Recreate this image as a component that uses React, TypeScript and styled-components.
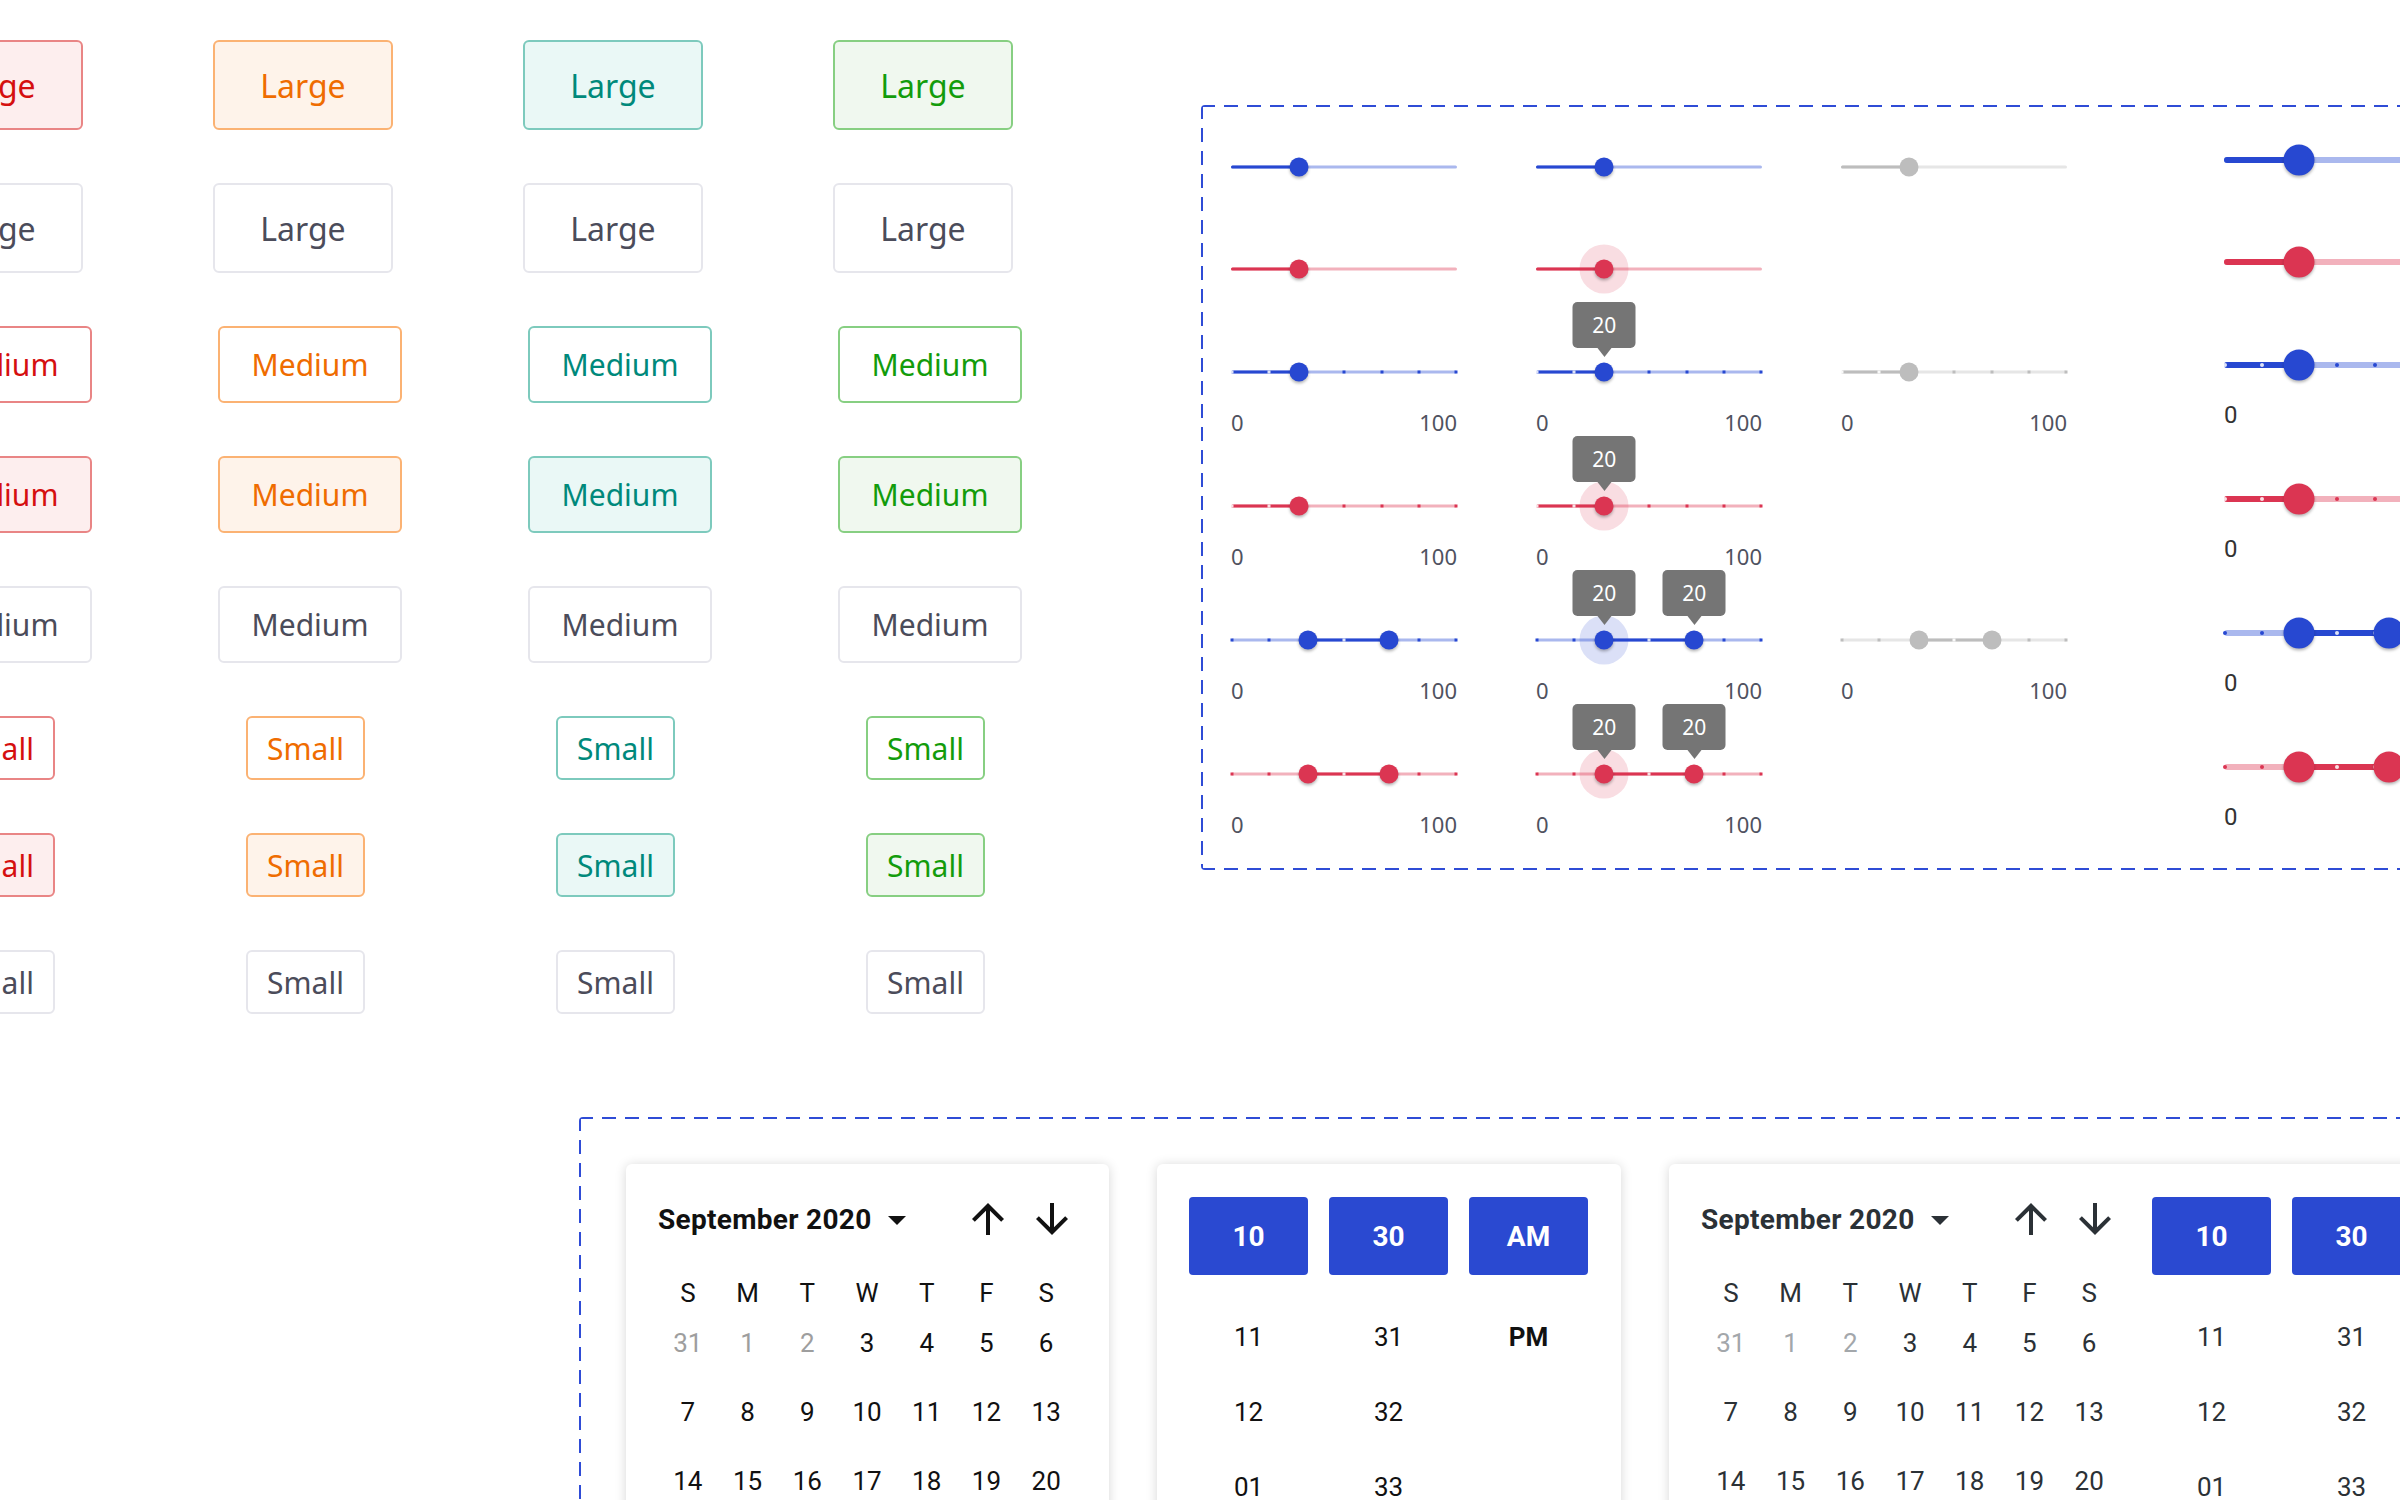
import React from 'react';
import styled, { createGlobalStyle, css } from 'styled-components';

const GlobalStyle = createGlobalStyle`
  html, body { margin: 0; padding: 0; background: #ffffff; overflow: hidden; }
  body { font-family: "Noto Sans", "Liberation Sans", sans-serif; }
  * { box-sizing: border-box; }
`;

/* ---------- page ---------- */
const Page = styled.div`
  width: 2400px;
  height: 1500px;
  overflow: hidden;
  background: #ffffff;
  display: flex;
  flex-direction: column;
`;

const TopSection = styled.div`
  display: flex;
  align-items: flex-start;
  flex-shrink: 0;
`;

const dashed = css`
  border-radius: 4px;
  background-image:
    repeating-linear-gradient(90deg, #2f4cd6 0 14px, transparent 14px 23px),
    repeating-linear-gradient(90deg, #2f4cd6 0 14px, transparent 14px 23px),
    repeating-linear-gradient(180deg, #2f4cd6 0 14px, transparent 14px 23px),
    repeating-linear-gradient(180deg, #2f4cd6 0 14px, transparent 14px 23px);
  background-size: 100% 2px, 100% 2px, 2px 100%, 2px 100%;
  background-position: 0 0, 0 100%, 0 0, 100% 0;
  background-repeat: no-repeat;
`;

/* ---------- buttons ---------- */
type Tone = 'red' | 'orange' | 'teal' | 'green';
type Look = 'tint' | 'outline' | 'plain';
type Size = 'lg' | 'md' | 'sm';

const tones: Record<Tone, { text: string; border: string; bg: string }> = {
  red: { text: '#d50f0f', border: '#e98585', bg: '#fdeeee' },
  orange: { text: '#ef6c00', border: '#fbb273', bg: '#fef3ea' },
  teal: { text: '#00897b', border: '#7dcabd', bg: '#eaf8f6' },
  green: { text: '#139c0b', border: '#87cf82', bg: '#f0f8ef' },
};

const sizes: Record<Size, { w: number; h: number; off: number; fs: number }> = {
  lg: { w: 180, h: 90, off: 0, fs: 32 },
  md: { w: 184, h: 77, off: 5, fs: 30 },
  sm: { w: 119, h: 64, off: 33, fs: 30 },
};

const ButtonGrid = styled.div`
  display: grid;
  grid-template-columns: repeat(4, 310px);
  row-gap: 53px;
  margin-left: -97px;
  margin-top: 40px;
  flex-shrink: 0;
  align-items: start;
  justify-items: start;
`;

const Btn = styled.button<{ $tone: Tone; $look: Look; $size: Size }>`
  display: inline-flex;
  align-items: center;
  justify-content: center;
  padding: 0;
  width: ${(p) => sizes[p.$size].w}px;
  height: ${(p) => sizes[p.$size].h}px;
  margin-left: ${(p) => sizes[p.$size].off}px;
  font-family: "Noto Sans", "Liberation Sans", sans-serif;
  font-size: ${(p) => sizes[p.$size].fs}px;
  font-weight: 400;
  border-radius: 6px;
  border: 2px solid ${(p) => (p.$look === 'plain' ? '#e6e6ec' : tones[p.$tone].border)};
  background: ${(p) => (p.$look === 'tint' ? tones[p.$tone].bg : '#ffffff')};
  color: ${(p) => (p.$look === 'plain' ? '#4b4c5a' : tones[p.$tone].text)};
`;

const buttonRows: { size: Size; look: Look; label: string }[] = [
  { size: 'lg', look: 'tint', label: 'Large' },
  { size: 'lg', look: 'plain', label: 'Large' },
  { size: 'md', look: 'outline', label: 'Medium' },
  { size: 'md', look: 'tint', label: 'Medium' },
  { size: 'md', look: 'plain', label: 'Medium' },
  { size: 'sm', look: 'outline', label: 'Small' },
  { size: 'sm', look: 'tint', label: 'Small' },
  { size: 'sm', look: 'plain', label: 'Small' },
];
const toneOrder: Tone[] = ['red', 'orange', 'teal', 'green'];

/* ---------- sliders ---------- */
type SColor = 'blue' | 'red' | 'gray';
const palette: Record<SColor, { main: string; light: string; halo: string; tickOn: string }> = {
  blue: { main: '#2748d1', light: '#aab8ee', halo: 'rgba(39,72,209,0.17)', tickOn: 'rgba(255,255,255,0.85)' },
  red: { main: '#db3552', light: '#f2b1bc', halo: 'rgba(219,53,82,0.17)', tickOn: 'rgba(255,255,255,0.85)' },
  gray: { main: '#bdbdbd', light: '#e6e6e6', halo: 'transparent', tickOn: 'rgba(255,255,255,0.9)' },
};

const SliderBox = styled.div`
  ${dashed};
  flex-shrink: 0;
  margin-left: 58px;
  margin-top: 105px;
  width: 1400px;
  padding: 42px 0 31px 30px;
`;

const SliderGrid = styled.div`
  display: grid;
  grid-template-columns: 305px 305px 383px 226px;
  grid-template-rows: 102px 103px 134px 134px 134px auto;
`;

const SliderCell = styled.div<{ $col: number; $row: number }>`
  grid-column: ${(p) => p.$col};
  grid-row: ${(p) => p.$row};
  width: 226px;
  display: flex;
  flex-direction: column;
`;

const Rail = styled.div<{ $big?: boolean }>`
  position: relative;
  width: 226px;
  height: 40px;
  margin-top: ${(p) => (p.$big ? '-7px' : '0')};
`;

const TrackBase = styled.div<{ $c: string; $big?: boolean }>`
  position: absolute;
  left: 0;
  right: 0;
  top: 50%;
  height: ${(p) => (p.$big ? 6 : 3)}px;
  transform: translateY(-50%);
  background: ${(p) => p.$c};
  border-radius: 3px;
`;

const TrackFill = styled.div<{ $c: string; $big?: boolean }>`
  position: absolute;
  top: 50%;
  height: ${(p) => (p.$big ? 6 : 3)}px;
  transform: translateY(-50%);
  background: ${(p) => p.$c};
  border-radius: 3px;
`;

const Tick = styled.span<{ $c: string; $big?: boolean }>`
  position: absolute;
  top: 50%;
  width: ${(p) => (p.$big ? 4 : 3)}px;
  height: ${(p) => (p.$big ? 4 : 3)}px;
  border-radius: ${(p) => (p.$big ? '50%' : '0')};
  transform: translate(-50%, -50%);
  background: ${(p) => p.$c};
`;

const Halo = styled.span<{ $c: string }>`
  position: absolute;
  top: 50%;
  width: 49px;
  height: 49px;
  border-radius: 50%;
  transform: translate(-50%, -50%);
  background: ${(p) => p.$c};
`;

const Thumb = styled.span<{ $c: string; $big?: boolean; $flat?: boolean }>`
  position: absolute;
  top: 50%;
  width: ${(p) => (p.$big ? 31 : 19)}px;
  height: ${(p) => (p.$big ? 31 : 19)}px;
  border-radius: 50%;
  transform: translate(-50%, -50%);
  background: ${(p) => p.$c};
  box-shadow: ${(p) => (p.$flat ? 'none' : '0 2px 3px rgba(0,0,0,0.28)')};
`;

const Tooltip = styled.span`
  position: absolute;
  bottom: calc(50% + 24px);
  width: 63px;
  height: 46px;
  transform: translateX(-50%);
  background: #757575;
  border-radius: 5px;
  color: #ffffff;
  font-family: "Noto Sans", sans-serif;
  font-size: 21px;
  display: flex;
  align-items: center;
  justify-content: center;
  &::after {
    content: '';
    position: absolute;
    left: 50%;
    bottom: -9px;
    transform: translateX(-50%);
    border-left: 7px solid transparent;
    border-right: 7px solid transparent;
    border-top: 9px solid #757575;
  }
`;

const Labels = styled.div<{ $big?: boolean }>`
  display: flex;
  justify-content: space-between;
  margin-top: 15px;
  height: 30px;
  line-height: 30px;
  font-family: ${(p) => (p.$big ? '"Roboto", sans-serif' : '"Noto Sans", sans-serif')};
  font-size: ${(p) => (p.$big ? 24 : 22)}px;
  color: ${(p) => (p.$big ? '#333333' : '#4f5260')};
`;

type SliderSpec = {
  col: number;
  row: number;
  color: SColor;
  values: number[];
  big?: boolean;
  ticks?: boolean;
  labels?: boolean;
  tips?: boolean;
  halo?: boolean;
};

const pct = (v: number) => `${v * 100}%`;

const Slider: React.FC<{ s: SliderSpec }> = ({ s }) => {
  const pal = palette[s.color];
  const range = s.values.length > 1;
  const a = range ? s.values[0] : 0;
  const b = range ? s.values[1] : s.values[0];
  const ticks = [0, 1, 2, 3, 4, 5, 6].map((i) => i / 6);
  return (
    <SliderCell $col={s.col} $row={s.row}>
      <Rail $big={s.big}>
        <TrackBase $c={pal.light} $big={s.big} />
        <TrackFill $c={pal.main} $big={s.big} style={{ left: pct(a), width: pct(b - a) }} />
        {s.ticks &&
          ticks.map((t) => (
            <Tick
              key={t}
              $big={s.big}
              $c={t >= a - 0.001 && t <= b + 0.001 ? pal.tickOn : pal.main}
              style={{ left: `calc(${pct(t)} + ${t === 0 ? 1 : t === 1 ? -1 : 0}px)` }}
            />
          ))}
        {s.halo && <Halo $c={pal.halo} style={{ left: pct(s.values[0]) }} />}
        {s.values.map((v, i) => (
          <Thumb key={i} $c={pal.main} $big={s.big} $flat={s.color === 'gray'} style={{ left: pct(v) }} />
        ))}
        {s.tips &&
          s.values.map((v, i) => (
            <Tooltip key={`t${i}`} style={{ left: pct(v) }}>
              20
            </Tooltip>
          ))}
      </Rail>
      {s.labels && (
        <Labels $big={s.big}>
          <span>0</span>
          <span>100</span>
        </Labels>
      )}
    </SliderCell>
  );
};

const sliders: SliderSpec[] = [
  { col: 1, row: 1, color: 'blue', values: [0.3] },
  { col: 1, row: 2, color: 'red', values: [0.3] },
  { col: 1, row: 3, color: 'blue', values: [0.3], ticks: true, labels: true },
  { col: 1, row: 4, color: 'red', values: [0.3], ticks: true, labels: true },
  { col: 1, row: 5, color: 'blue', values: [0.34, 0.7], ticks: true, labels: true },
  { col: 1, row: 6, color: 'red', values: [0.34, 0.7], ticks: true, labels: true },

  { col: 2, row: 1, color: 'blue', values: [0.302] },
  { col: 2, row: 2, color: 'red', values: [0.302], halo: true },
  { col: 2, row: 3, color: 'blue', values: [0.302], ticks: true, labels: true, tips: true },
  { col: 2, row: 4, color: 'red', values: [0.302], ticks: true, labels: true, tips: true, halo: true },
  { col: 2, row: 5, color: 'blue', values: [0.302, 0.7], ticks: true, labels: true, tips: true, halo: true },
  { col: 2, row: 6, color: 'red', values: [0.302, 0.7], ticks: true, labels: true, tips: true, halo: true },

  { col: 3, row: 1, color: 'gray', values: [0.3] },
  { col: 3, row: 3, color: 'gray', values: [0.3], ticks: true, labels: true },
  { col: 3, row: 5, color: 'gray', values: [0.345, 0.668], ticks: true, labels: true },

  { col: 4, row: 1, color: 'blue', values: [0.33], big: true },
  { col: 4, row: 2, color: 'red', values: [0.33], big: true },
  { col: 4, row: 3, color: 'blue', values: [0.33], big: true, ticks: true, labels: true },
  { col: 4, row: 4, color: 'red', values: [0.33], big: true, ticks: true, labels: true },
  { col: 4, row: 5, color: 'blue', values: [0.33, 0.73], big: true, ticks: true, labels: true },
  { col: 4, row: 6, color: 'red', values: [0.33, 0.73], big: true, ticks: true, labels: true },
];

/* ---------- calendar ---------- */
const CalendarBox = styled.div`
  ${dashed};
  flex-shrink: 0;
  margin-left: 579px;
  margin-top: 103px;
  width: 2000px;
  height: 700px;
  padding: 47px 0 0 47px;
  display: flex;
  align-items: flex-start;
  gap: 48px;
`;

const Card = styled.div<{ $ink: string }>`
  flex-shrink: 0;
  background: #ffffff;
  border-radius: 6px;
  box-shadow: 0 1px 12px rgba(0, 0, 0, 0.16);
  padding: 33px 33px 32px 32px;
  display: flex;
  gap: 33px;
  font-family: "Roboto", "Liberation Sans", sans-serif;
  color: ${(p) => p.$ink};
`;

const CalBody = styled.div`
  width: 418px;
  display: flex;
  flex-direction: column;
`;

const MonthRow = styled.div`
  display: flex;
  align-items: center;
  height: 44px;
`;

const MonthLabel = styled.span`
  font-size: 28px;
  font-weight: 700;
  letter-spacing: 0.3px;
`;

const CaretIcon = styled.svg`
  margin-left: 16px;
  margin-top: 2px;
`;

const Spacer = styled.div`
  flex: 1;
`;

const NavGroup = styled.div`
  display: flex;
  gap: 16px;
`;

const NavButton = styled.button`
  width: 48px;
  height: 48px;
  padding: 0;
  border: 0;
  background: none;
  color: inherit;
  display: flex;
  align-items: center;
  justify-content: center;
`;

const DayGrid = styled.div`
  display: grid;
  grid-template-columns: repeat(7, 1fr);
  grid-template-rows: 30px;
  grid-auto-rows: 69px;
  margin-top: 37px;
`;

const Weekday = styled.div`
  display: flex;
  align-items: center;
  justify-content: center;
  font-size: 26px;
`;

const Day = styled.div<{ $muted?: boolean; $mutedInk: string }>`
  display: flex;
  align-items: center;
  justify-content: center;
  font-size: 26px;
  color: ${(p) => (p.$muted ? p.$mutedInk : 'inherit')};
`;

const TimeGrid = styled.div`
  display: grid;
  grid-template-columns: repeat(3, 119px);
  column-gap: 21px;
  grid-template-rows: 102px;
  grid-auto-rows: 75px;
`;

const TimeChip = styled.div`
  height: 78px;
  border-radius: 4px;
  background: #2a49d1;
  color: #ffffff;
  font-size: 28px;
  font-weight: 700;
  display: flex;
  align-items: center;
  justify-content: center;
`;

const TimeCell = styled.div<{ $bold?: boolean }>`
  display: flex;
  align-items: center;
  justify-content: center;
  font-size: 26px;
  font-weight: ${(p) => (p.$bold ? 700 : 400)};
`;

const ArrowUp = () => (
  <svg width="48" height="48" viewBox="0 0 24 24" aria-hidden="true">
    <path fill="currentColor" d="M4 12l1.41 1.41L11 7.83V20h2V7.83l5.58 5.59L20 12l-8-8-8 8z" />
  </svg>
);

const ArrowDown = () => (
  <svg width="48" height="48" viewBox="0 0 24 24" aria-hidden="true">
    <path fill="currentColor" d="M20 12l-1.41-1.41L13 16.17V4h-2v12.17l-5.58-5.59L4 12l8 8 8-8z" />
  </svg>
);

const weekdays = ['S', 'M', 'T', 'W', 'T', 'F', 'S'];
const days: { d: string; m?: boolean }[] = [
  { d: '31', m: true }, { d: '1', m: true }, { d: '2', m: true }, { d: '3' }, { d: '4' }, { d: '5' }, { d: '6' },
  { d: '7' }, { d: '8' }, { d: '9' }, { d: '10' }, { d: '11' }, { d: '12' }, { d: '13' },
  { d: '14' }, { d: '15' }, { d: '16' }, { d: '17' }, { d: '18' }, { d: '19' }, { d: '20' },
  { d: '21' }, { d: '22' }, { d: '23' }, { d: '24' }, { d: '25' }, { d: '26' }, { d: '27' },
];

const timeRows: { t: string; b?: boolean }[][] = [
  [{ t: '11' }, { t: '31' }, { t: 'PM', b: true }],
  [{ t: '12' }, { t: '32' }, { t: '' }],
  [{ t: '01' }, { t: '33' }, { t: '' }],
  [{ t: '02' }, { t: '34' }, { t: '' }],
];

const Calendar: React.FC<{ mutedInk: string }> = ({ mutedInk }) => (
  <CalBody>
    <MonthRow>
      <MonthLabel>September 2020</MonthLabel>
      <CaretIcon width="18" height="9" viewBox="0 0 18 9" aria-hidden="true">
        <path d="M0 0h18L9 9z" fill="currentColor" />
      </CaretIcon>
      <Spacer />
      <NavGroup>
        <NavButton>
          <ArrowUp />
        </NavButton>
        <NavButton>
          <ArrowDown />
        </NavButton>
      </NavGroup>
    </MonthRow>
    <DayGrid>
      {weekdays.map((w, i) => (
        <Weekday key={`w${i}`}>{w}</Weekday>
      ))}
      {days.map((d, i) => (
        <Day key={`d${i}`} $muted={d.m} $mutedInk={mutedInk}>
          {d.d}
        </Day>
      ))}
    </DayGrid>
  </CalBody>
);

const TimePicker: React.FC = () => (
  <TimeGrid>
    <TimeChip>10</TimeChip>
    <TimeChip>30</TimeChip>
    <TimeChip>AM</TimeChip>
    {timeRows.flat().map((c, i) => (
      <TimeCell key={i} $bold={c.b}>
        {c.t}
      </TimeCell>
    ))}
  </TimeGrid>
);

export default function App() {
  return (
    <>
      <GlobalStyle />
      <Page>
        <TopSection>
          <ButtonGrid>
            {buttonRows.map((r, ri) =>
              toneOrder.map((t) => (
                <Btn key={`${ri}-${t}`} $tone={t} $look={r.look} $size={r.size}>
                  {r.label}
                </Btn>
              ))
            )}
          </ButtonGrid>
          <SliderBox>
            <SliderGrid>
              {sliders.map((s) => (
                <Slider key={`${s.col}-${s.row}`} s={s} />
              ))}
            </SliderGrid>
          </SliderBox>
        </TopSection>
        <CalendarBox>
          <Card $ink="#111111">
            <Calendar mutedInk="#9e9e9e" />
          </Card>
          <Card $ink="#111111">
            <TimePicker />
          </Card>
          <Card $ink="#2b3136">
            <Calendar mutedInk="#a3a7ab" />
            <TimePicker />
          </Card>
        </CalendarBox>
      </Page>
    </>
  );
}
